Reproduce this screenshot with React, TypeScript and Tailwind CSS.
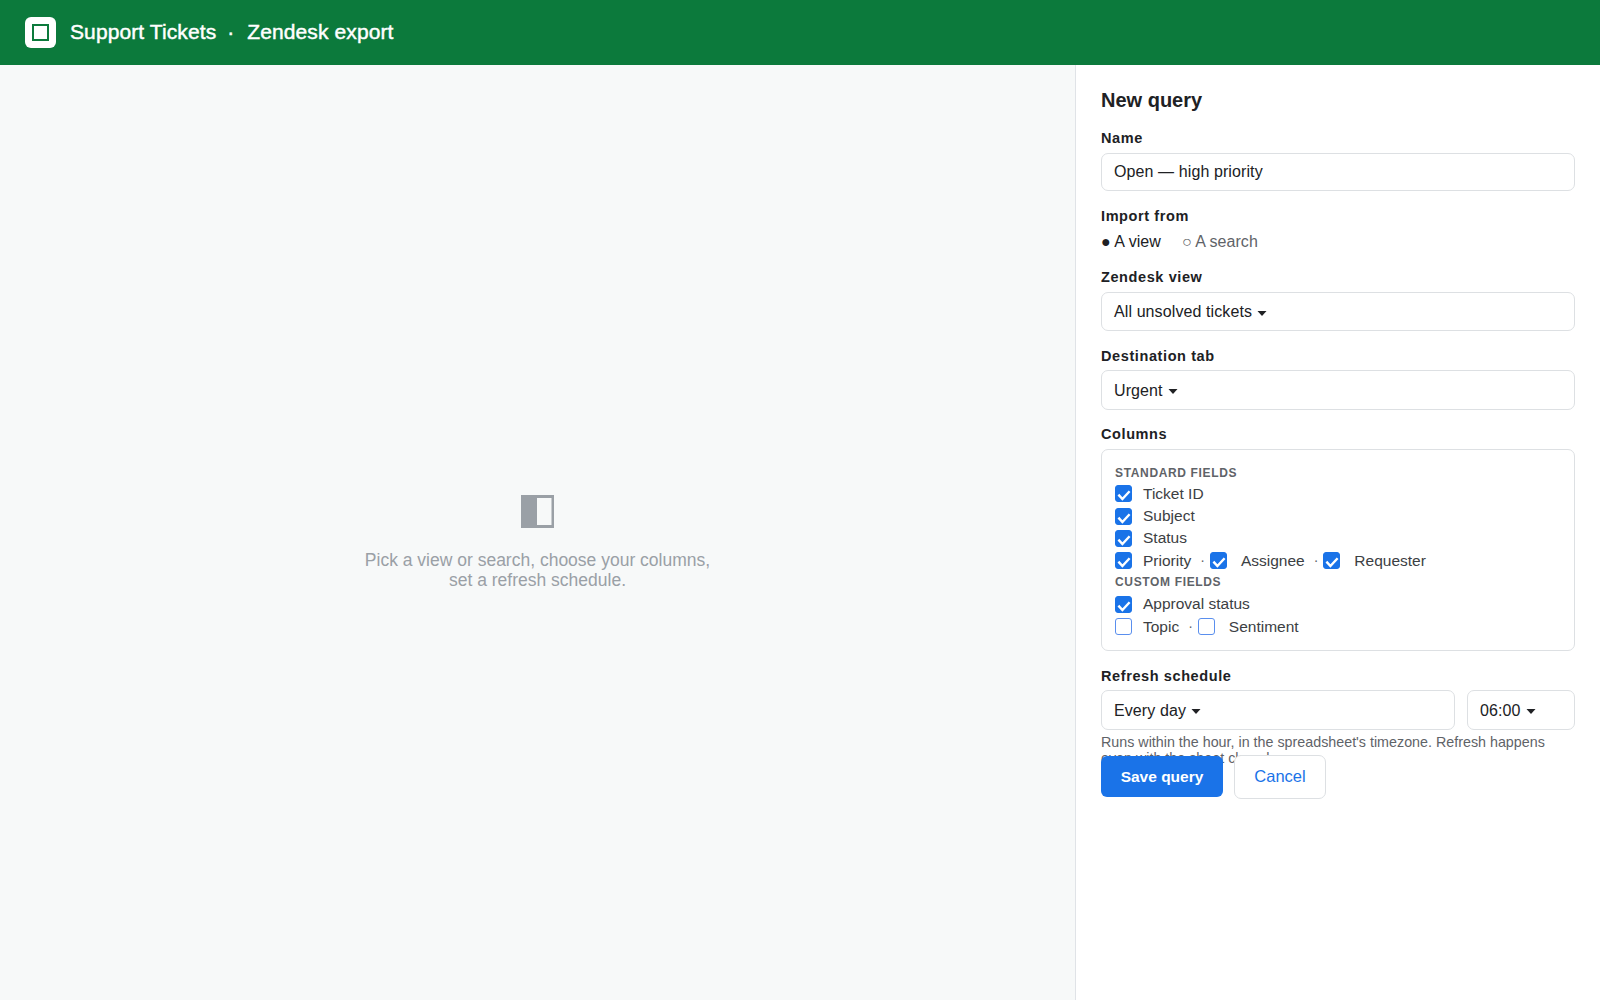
import React from "react";

function Caret() {
  return (
    <svg width="10" height="5" viewBox="0 0 10 5" className="mt-[2px] ml-[5px] shrink-0">
      <path d="M0.5 0h9L5 5z" fill="#202124" />
    </svg>
  );
}

function Box({ checked = true }: { checked?: boolean }) {
  return (
    <span
      className={
        "mt-[1px] inline-flex h-[17px] w-[17px] shrink-0 items-center justify-center rounded-[3px] border " +
        (checked ? "border-[#1a73e8] bg-[#1a73e8]" : "border-[#5a8fee] bg-white")
      }
    >
      {checked && (
        <svg width="17" height="17" viewBox="0 0 17 17" className="shrink-0">
          <path d="M3.4 9.6 7.4 14 14.6 6.2" fill="none" stroke="#fff" strokeWidth="2.4" />
        </svg>
      )}
    </span>
  );
}

function Label({ children, className = "" }: { children: React.ReactNode; className?: string }) {
  return (
    <div className={"h-[18px] text-[14.5px] leading-[18px] font-bold tracking-[0.6px] text-[#202124] " + className}>
      {children}
    </div>
  );
}

function Field({ children, className = "" }: { children: React.ReactNode; className?: string }) {
  return (
    <div
      className={
        "flex items-center rounded-[7px] border border-[#dde0e3] bg-white px-[12px] text-[16px] tracking-[0.1px] text-[#202124] " +
        className
      }
    >
      {children}
    </div>
  );
}

function Row({ children }: { children: React.ReactNode }) {
  return <div className="flex h-[22.4px] items-center text-[15.5px] text-[#3c4043]">{children}</div>;
}

function Group({ children, className = "" }: { children: React.ReactNode; className?: string }) {
  return (
    <div className={"flex items-center text-[12px] font-bold tracking-[0.65px] text-[#5f6368] " + className}>
      {children}
    </div>
  );
}

function Dot() {
  return <span className="mr-[5px] ml-[9px] text-[14px] leading-none text-[#5f6368]">·</span>;
}

export default function App() {
  return (
    <div className="flex h-screen flex-col overflow-hidden bg-white font-['Liberation_Sans',Arial,sans-serif]">
      <header className="flex h-[65px] shrink-0 items-center bg-[#0c7a3c] pl-[25px] text-white">
        <div className="flex h-[31px] w-[31px] items-center justify-center rounded-[6px] bg-white">
          <div className="h-[17px] w-[17px] border-2 border-[#0c7a3c]" />
        </div>
        <div className="ml-[14px] flex items-center pb-[2px] text-[21px] leading-none tracking-[0.1px] [-webkit-text-stroke:0.45px_white]">
          <span>Support Tickets</span>
          <span className="mr-[13px] ml-[11px]">·</span>
          <span>Zendesk export</span>
        </div>
      </header>
      <div className="flex min-h-0 flex-1">
        <main className="flex flex-1 flex-col items-center justify-center bg-[#f7f9f9] pt-[20px] text-center">
          <svg width="33" height="33" viewBox="0 0 33 33" className="mb-[22px]">
            <path d="M0 0h33v33H0z" fill="#9aa0a6" />
            <path d="M16 3h14.5v27H16z" fill="#f7f9f9" />
          </svg>
          <p className="text-[17.5px] leading-[20px] text-[#9aa0a6]">
            Pick a view or search, choose your columns,
            <br />
            set a refresh schedule.
          </p>
        </main>
        <aside className="w-[525px] shrink-0 border-l border-[#e0e3e7] bg-white pt-[23px] pr-[25px] pl-[25px]">
          <h2 className="mb-[17px] h-[24px] text-[20px] leading-[24px] font-bold text-[#202124]">New query</h2>
          <Label className="mb-[6px]">Name</Label>
          <Field className="h-[38px]">Open — high priority</Field>
          <Label className="mt-[16px] mb-[7px]">Import from</Label>
          <div className="flex h-[20px] items-center text-[16px] tracking-[0.05px]">
            <span className="text-[#202124]">● A view</span>
            <span className="ml-[21px] text-[#5f6368]">○ A search</span>
          </div>
          <Label className="mt-[16px] mb-[6px]">Zendesk view</Label>
          <Field className="h-[39px] pt-[1px]">
            All unsolved tickets
            <Caret />
          </Field>
          <Label className="mt-[16px] mb-[5px]">Destination tab</Label>
          <Field className="h-[40px] pt-[1px]">
            Urgent
            <Caret />
          </Field>
          <Label className="mt-[15px] mb-[6px]">Columns</Label>
          <div className="h-[202px] rounded-[7px] border border-[#dde0e3] px-[13px] pt-[13px]">
            <Group className="h-[19px]">STANDARD FIELDS</Group>
            <Row>
              <Box />
              <span className="ml-[11px]">Ticket ID</span>
            </Row>
            <Row>
              <Box />
              <span className="ml-[11px]">Subject</span>
            </Row>
            <Row>
              <Box />
              <span className="ml-[11px]">Status</span>
            </Row>
            <Row>
              <Box />
              <span className="ml-[11px]">Priority</span>
              <Dot />
              <Box />
              <span className="ml-[14px]">Assignee</span>
              <Dot />
              <Box />
              <span className="ml-[14px]">Requester</span>
            </Row>
            <Group className="h-[21px]">CUSTOM FIELDS</Group>
            <Row>
              <Box />
              <span className="ml-[11px]">Approval status</span>
            </Row>
            <Row>
              <Box checked={false} />
              <span className="ml-[11px]">Topic</span>
              <Dot />
              <Box checked={false} />
              <span className="ml-[14px]">Sentiment</span>
            </Row>
          </div>
          <Label className="mt-[16px] mb-[5px]">Refresh schedule</Label>
          <div className="flex gap-[12px]">
            <Field className="h-[40px] flex-1 pt-[1px]">
              Every day
              <Caret />
            </Field>
            <Field className="h-[40px] w-[108px] pt-[1px]">
              06:00
              <Caret />
            </Field>
          </div>
          <p className="mt-[5.25px] h-[19.25px] text-[14.3px] leading-[15.5px] text-[#5f6368]">
            Runs within the hour, in the spreadsheet's timezone. Refresh happens even with the sheet closed.
          </p>
          <div className="flex items-center gap-[11px]">
            <button className="relative h-[41px] w-[122px] rounded-[6px] bg-[#1a73e8] text-[15.5px] font-bold text-white">
              Save query
            </button>
            <button className="relative h-[44px] w-[92px] rounded-[7px] border border-[#dde0e3] bg-white text-[16.5px] text-[#1a73e8]">
              Cancel
            </button>
          </div>
        </aside>
      </div>
    </div>
  );
}
